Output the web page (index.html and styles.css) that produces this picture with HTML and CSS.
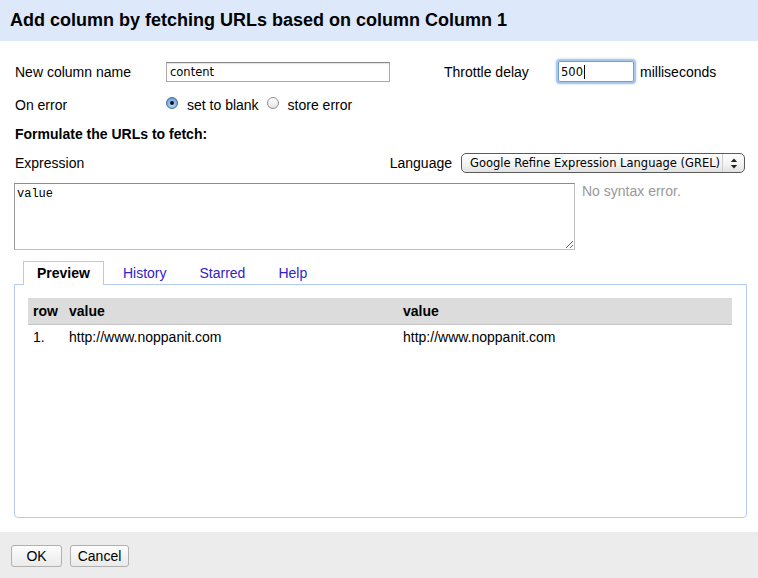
FILE: index.html
```html
<!DOCTYPE html>
<html>
<head>
<meta charset="utf-8">
<link rel="stylesheet" href="styles.css">
</head>
<body>
<div class="dialog">
  <div class="dialog-header">Add column by fetching URLs based on column Column 1</div>
  <div class="dialog-body">
    <div class="row row-name">
      <label class="lbl">New column name</label>
      <input class="text-input" type="text" value="content">
      <span></span>
      <label class="lbl-r">Throttle delay</label>
      <div class="throttle"><span class="throttle-val">500</span><span class="caret"></span></div>
      <span class="ms">milliseconds</span>
    </div>
    <div class="row row-error">
      <label class="lbl err-lbl">On error</label>
      <span class="radio checked"></span>
      <span class="radio-text">set to blank</span>
      <span class="radio"></span>
      <span class="radio-text">store error</span>
    </div>
    <div class="row row-formulate">Formulate the URLs to fetch:</div>
    <div class="row row-expr">
      <span class="lbl">Expression</span>
      <div class="lang">
        <span class="lang-lbl">Language</span>
        <div class="select">
          <span class="select-text">Google Refine Expression Language (GREL)</span>
          <span class="select-arrows">
            <svg width="8" height="11" viewBox="0 0 8 11"><path d="M4 0.5 L7.2 4 H0.8 Z" fill="#222"/><path d="M4 10.5 L7.2 7 H0.8 Z" fill="#222"/></svg>
          </span>
        </div>
      </div>
    </div>
    <div class="row row-textarea">
      <textarea class="expr" spellcheck="false">value</textarea>
      <span class="status">No syntax error.</span>
    </div>
    <ul class="tabs">
      <li class="tab active">Preview</li>
      <li class="tab">History</li>
      <li class="tab">Starred</li>
      <li class="tab">Help</li>
    </ul>
    <div class="panel">
      <table class="preview">
        <thead>
          <tr><th class="c-row">row</th><th class="c-val">value</th><th class="c-val">value</th></tr>
        </thead>
        <tbody>
          <tr><td>1.</td><td>http://www.noppanit.com</td><td>http://www.noppanit.com</td></tr>
        </tbody>
      </table>
    </div>
  </div>
  <div class="dialog-footer">
    <button class="btn btn-ok">OK</button>
    <button class="btn btn-cancel">Cancel</button>
  </div>
</div>
</body>
</html>
```
FILE: styles.css
```css
* { box-sizing: border-box; }
html, body { margin: 0; padding: 0; background: #fff; }
body { font-family: "Liberation Sans", Arial, sans-serif; font-size: 14px; color: #000; }

.dialog { width: 758px; height: 578px; display: flex; flex-direction: column; }

.dialog-header {
  height: 41px;
  background: #dde8fa;
  font-weight: bold;
  font-size: 18px;
  line-height: 41px;
  padding-left: 10px;
}

.dialog-body { flex: 1; padding: 20px 11px 0 14px; }

.row { display: flex; align-items: center; }
.lbl { padding-left: 1px; }

.row-name {
  display: grid;
  grid-template-columns: 152px 224px 54px 114px 76px auto;
  align-items: center;
  height: 21px;
}
.text-input {
  width: 224px; height: 20px;
  border: 1px solid #a9a9a9;
  border-top-color: #8a8a8a;
  box-shadow: inset 0 1px 1px rgba(0,0,0,0.12);
  font-family: "DejaVu Sans", sans-serif;
  font-size: 11.5px;
  padding: 1px 3px 0;
  color: #000;
  outline: none;
}
.throttle {
  width: 76px; height: 21px;
  border: 1px solid #6d9fd4;
  border-radius: 2px;
  box-shadow: 0 0 0 2px #a9c8ea, 0 0 3px 2px #bcd6f0;
  display: flex; align-items: center;
  padding-left: 2px;
  font-family: "DejaVu Sans", sans-serif;
  font-size: 11.5px;
}
.caret { width: 1px; height: 14px; background: #000; margin-left: 1px; }
.ms { margin-left: 6px; }

.row-error { margin-top: 12px; height: 21px; }
.err-lbl { width: 152px; }
.radio {
  width: 12px; height: 12px;
  border-radius: 50%;
  border: 1px solid #8f8f8f;
  background: linear-gradient(#ffffff, #e4e4e4);
  margin-top: -3px;
  position: relative;
  display: inline-block;
}
.radio.checked {
  border-color: #4a6c95;
  background: radial-gradient(circle at 50% 65%, #c9e3fb 0%, #7fb2e6 55%, #4f86c6 100%);
}
.radio.checked::after {
  content: "";
  position: absolute;
  left: 3px; top: 3px;
  width: 4px; height: 4px;
  border-radius: 50%;
  background: #111;
}
.radio-text { margin-left: 9px; margin-right: 8px; }

.row-formulate { margin-top: 9px; height: 20px; font-weight: bold; padding-left: 1px; }

.row-expr { margin-top: 9px; height: 20px; justify-content: space-between; margin-right: 2px; }
.lang { display: flex; align-items: center; }
.lang-lbl { margin-right: 9px; }
.select {
  width: 284px; height: 20px;
  border: 1px solid #5a5a5a;
  border-radius: 5px;
  background: linear-gradient(#ffffff, #f1f1f1 60%, #e2e2e2);
  display: flex; align-items: center;
  font-family: "DejaVu Sans", sans-serif;
  font-size: 11.5px;
  padding-left: 8px;
}
.select-text { flex: 1; white-space: nowrap; }
.select-arrows {
  width: 22px; height: 18px;
  border-left: 1px solid #cfcfcf;
  display: flex; align-items: center; justify-content: center;
}

.row-textarea { margin-top: 10px; align-items: flex-start; }
.expr {
  width: 561px; height: 67px;
  border: 1px solid #bdbdbd;
  border-top-color: #8c8c8c;
  border-left-color: #9c9c9c;
  font-family: "Liberation Mono", "Courier New", monospace;
  font-size: 12px;
  padding: 3px 2px 2px;
  margin: 0;
  resize: both;
  outline: none;
}
.status { margin-left: 7px; color: #999; }

.tabs {
  list-style: none;
  margin: 11px 0 0 0;
  padding: 0 0 0 9px;
  display: flex;
  height: 23px;
}
.tab {
  padding: 0 13px;
  margin-right: 5px;
  line-height: 22px;
  color: #3322c8;
  border: 1px solid transparent;
  border-bottom: none;
}
.tab.active {
  color: #000;
  font-weight: bold;
  border-color: #b3cbf2;
  background: #fff;
  height: 24px;
  position: relative;
  z-index: 1;
}

.panel {
  width: 733px;
  height: 234px;
  border: 1px solid #b3cbf2;
  border-radius: 0 0 4px 4px;
  padding: 13px 14px 0 13px;
}

.preview { width: 704px; border-collapse: collapse; }
.preview th {
  background: #dcdcdc;
  height: 26px;
  text-align: left;
  font-weight: bold;
  padding: 0 0 0 5px;
  border-bottom: 1px solid #c6c6c6;
}
.preview td { height: 26px; padding: 0 0 0 5px; }
.c-row { width: 36px; }
.c-val { width: 334px; }

.dialog-footer {
  height: 46px;
  background: #ececec;
  padding: 13px 0 0 11px;
  display: flex;
  align-items: flex-start;
}
.btn {
  height: 22px;
  border: 1px solid #b0b0b0;
  border-radius: 3px;
  background: linear-gradient(#fdfdfd, #eaeaea);
  font-family: "Liberation Sans", Arial, sans-serif;
  font-size: 14px;
  color: #000;
  padding: 0;
}
.btn-ok { width: 51px; }
.btn-cancel { width: 59px; margin-left: 8px; }
```
